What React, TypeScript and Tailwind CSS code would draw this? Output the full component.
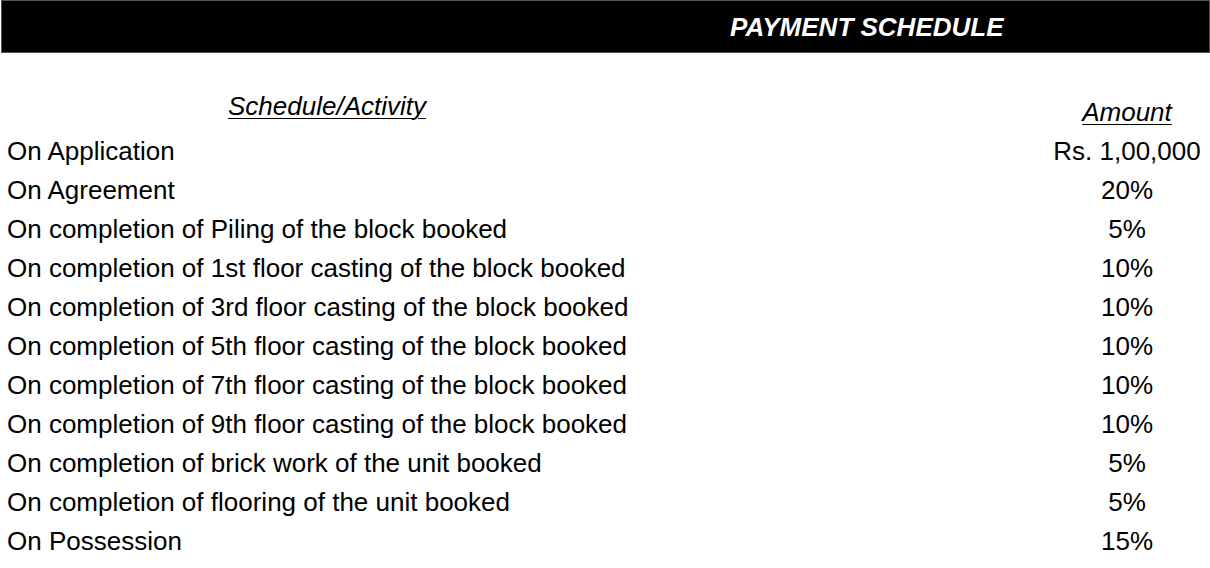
import React from 'react';

// Payment schedule sheet: black title bar, two column table of stages and amounts.
const rows: [string, string][] = [
    ['On Application', 'Rs. 1,00,000'],
    ['On Agreement', '20%'],
    ['On completion of Piling of the block booked', '5%'],
    ['On completion of 1st floor casting of the block booked', '10%'],
    ['On completion of 3rd floor casting of the block booked', '10%'],
    ['On completion of 5th floor casting of the block booked', '10%'],
    ['On completion of 7th floor casting of the block booked', '10%'],
    ['On completion of 9th floor casting of the block booked', '10%'],
    ['On completion of brick work of the unit booked', '5%'],
    ['On completion of flooring of the unit booked', '5%'],
    ['On Possession', '15%'],
];

export default function App() {
    return (
        <div className="w-[1210px] h-[568px] bg-white text-black overflow-hidden font-['Liberation_Sans',Arial,sans-serif]">
            <div className="ml-px h-[53px] bg-black border border-[#555] flex items-center pl-[728px]">
                <span className="text-white font-bold italic text-[26px] leading-none">PAYMENT SCHEDULE</span>
            </div>

            <div className="flex h-[79px] text-[26px] leading-[39px] italic">
                <div className="w-[654px] flex items-end justify-center pb-[6px]">
                    <span className="underline underline-offset-[3px] decoration-1">Schedule/Activity</span>
                </div>
                <div className="flex-1" />
                <div className="w-[166px] flex items-end justify-center">
                    <span className="underline underline-offset-[3px] decoration-1">Amount</span>
                </div>
            </div>

            <div className="flex flex-col text-[26px] leading-[39px]">
                {rows.map(([label, amount]) => (
                    <div key={label} className="flex">
                        <div className="flex-1 pl-[7px] whitespace-nowrap">{label}</div>
                        <div className="w-[166px] text-center whitespace-nowrap">{amount}</div>
                    </div>
                ))}
            </div>
        </div>
    );
}
